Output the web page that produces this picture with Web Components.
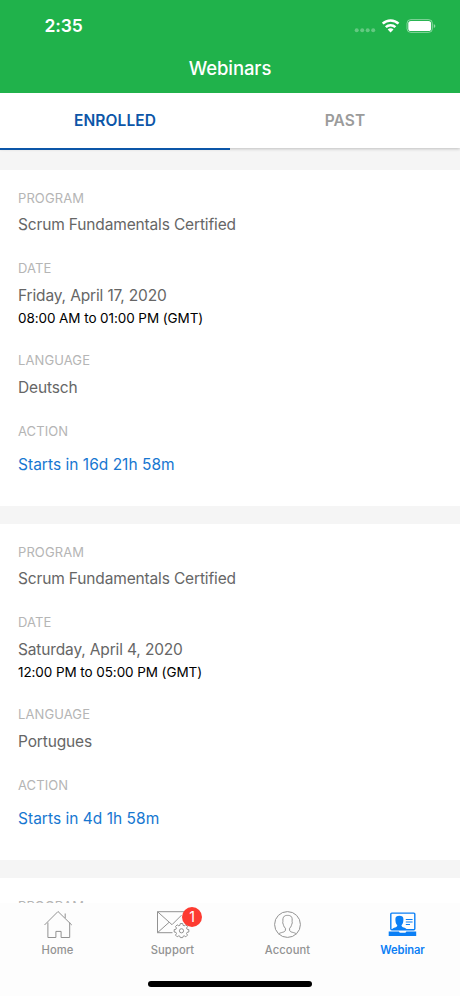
<!DOCTYPE html>
<html lang="en">
<head>
<meta charset="utf-8">
<title>Webinars</title>
<style>
body{margin:0;font-family:Inter,"Liberation Sans",sans-serif;background:#f5f5f5}
</style>
</head>
<body>
<webinar-app></webinar-app>
<script>
function define(name, html, fill) {
  customElements.define(name, class extends HTMLElement {
    connectedCallback() {
      if (this.shadowRoot) return;
      const root = this.attachShadow({mode: 'open'});
      const t = document.createElement('template');
      t.innerHTML = html;
      root.append(t.content.cloneNode(true));
      if (fill) fill(this, root);
    }
  });
}

define('status-bar', `
<style>
:host{display:flex;height:50px;box-sizing:border-box;padding:1px 24px 0 44.5px;align-items:center;justify-content:space-between;color:#fff}
b{font-size:17.5px;font-weight:600;line-height:24px;letter-spacing:-.1px}
svg{display:block}
</style>
<b>2:35</b>
<svg width="82" height="16" viewBox="354 17 82 16">
  <g fill="#fff" opacity=".3"><circle cx="356.7" cy="29.3" r="2"/><circle cx="362.2" cy="29.3" r="2"/><circle cx="367.7" cy="29.3" r="2"/><circle cx="373.2" cy="29.3" r="2"/></g>
  <g fill="none" stroke="#fff" stroke-width="2.5"><path d="M382.7 22.7a11.2 11.2 0 0 1 15.8 0"/><path d="M385.8 26.1a6.9 6.9 0 0 1 9.6 0"/></g>
  <path d="M387.7 28.5a4 4 0 0 1 5.8 0L390.6 31.5z" fill="#fff"/>
  <rect x="407" y="18.6" width="25.4" height="12.8" rx="3.8" fill="none" stroke="#fff" stroke-opacity=".45"/>
  <rect x="408.3" y="19.9" width="22.8" height="10.2" rx="2.6" fill="#fff"/>
  <path d="M433.8 22.9q1.6.7 1.6 2.1t-1.6 2.1z" fill="#fff" opacity=".5"/>
</svg>`);

define('nav-header', `
<style>
:host{display:block;height:92.5px;background:#20b24b;color:#fff;position:relative;z-index:1}
h1{margin:0;height:36px;line-height:36px;text-align:center;font-size:18.5px;font-weight:500;letter-spacing:-.1px}
</style>
<status-bar></status-bar><h1><slot></slot></h1>`);

define('tab-item', `
<style>
:host{flex:1;display:block;box-sizing:border-box;height:57.5px;line-height:55px;text-align:center;font-size:15.5px;font-weight:600;color:#9b9b9b;letter-spacing:.1px;border-bottom:2px solid transparent}
:host([active]){color:#0c56a8;border-color:#0c56a8}
</style><slot></slot>`);

define('tab-bar', `
<style>
:host{display:flex;height:55.5px;background:#fff;box-shadow:0 1px 3px rgba(0,0,0,.22);position:relative}
</style><slot></slot>`);

define('info-field', `
<style>
:host{display:block;height:70px}
:host([time]){height:92px}
.l{font-size:13px;line-height:18px;color:#b5b5b5;letter-spacing:.1px}
.v{font-size:15.5px;line-height:24px;margin-top:6px;color:#666;letter-spacing:-.15px}
:host([time]) .v,:host([low]) .v{margin-top:7px}
.t{font-size:13.5px;line-height:22px;margin-top:-1px;color:#000;letter-spacing:-.08px}
:host([action]) .l{position:relative;top:.5px}
:host([action]) .v{margin-top:13.5px;color:#1777d1;letter-spacing:.02px}
</style><div class="l"></div><div class="v"></div>`, (el, root) => {
  root.querySelector('.l').textContent = el.getAttribute('label');
  root.querySelector('.v').textContent = el.getAttribute('value');
  if (el.hasAttribute('time')) {
    const d = document.createElement('div');
    d.className = 't';
    d.textContent = el.getAttribute('time');
    root.append(d);
  }
});

define('webinar-item', `
<style>
:host{display:block;box-sizing:border-box;height:336px;padding:19px 18px 0;background:#fff;margin-bottom:18px}
</style>
<section></section>`, (el, root) => {
  const g = k => el.getAttribute(k);
  root.querySelector('section').innerHTML = `<info-field label="PROGRAM" value="${g('program')}"></info-field>` +
    (g('date') ? `<info-field label="DATE" value="${g('date')}" time="${g('time')}"></info-field>
    <info-field label="LANGUAGE" value="${g('language')}" low></info-field>
    <info-field label="ACTION" value="${g('action')}" action></info-field>` : '');
});

define('nav-item', `
<style>
:host{width:115px;display:flex;flex-direction:column;align-items:center;color:#929292}
:host([active]){color:#0b7ff5}
.i{position:relative;height:39px;width:44px}
svg{display:block;width:44px;height:38px;overflow:visible}
.n{font-size:11.2px;font-weight:500;line-height:16px;letter-spacing:.1px}
:host([active]) .n{font-weight:600;letter-spacing:-.1px}
em{position:absolute;left:31.5px;top:3.5px;width:20px;height:20px;border-radius:50%;background:#fd3b31;color:#fff;font:400 14px/20px Inter,sans-serif;text-align:center}
</style>
<div class="i"></div><div class="n"><slot></slot></div>`, (el, root) => {
  const icons = {
    home: '<path d="M8.5 22 22 8.5 35.8 22M11.9 19.5V34.5H19.9V28.4H25.1V34.5H33.7V19.5M29.2 15V10.5"/>',
    support: '<g transform="translate(1 .2)"><path d="M20.5 29.5H5.5V8.5H34M5.5 8.5 20 21.5 29.5 12M5.5 29.5 17 19.2"/><path d="M28.3 22h2.4l.4 1.8 1.1.5 1.6-1 1.7 1.7-1 1.6.5 1.1 1.8.4v2.4l-1.8.4-.5 1.1 1 1.6-1.7 1.7-1.6-1-1.1.5-.4 1.3h-2.4l-.4-1.3-1.1-.5-1.6 1-1.7-1.7 1-1.6-.5-1.1-1.8-.4v-2.4l1.8-.4.5-1.1-1-1.6 1.7-1.7 1.6 1 1.1-.5z" transform="translate(0 -1.7)"/><circle cx="29.5" cy="27.6" r="2.1"/></g>',
    account: '<g transform="translate(-.5 0)"><circle cx="22" cy="21.5" r="12.9"/><path d="M13.2 31C15 28.9 19.9 29.8 19.9 27V25.2C18 23.8 18.1 21.7 17.2 19.8 17.8 18.5 16.8 16 18 14.2 19 12.3 21 12.4 22 12.4S25.2 12.3 26.2 14.2C27.2 16 26.2 18.5 26.8 19.8 25.9 21.7 26 23.8 24.1 25.2V27C24.1 29.8 29 28.9 30.8 31"/></g>',
    webinar: '<rect x="9.8" y="10.1" width="24" height="16.7" rx="1" stroke-width="1.4"/><path fill="currentColor" stroke="none" d="M11 26.5C12 24.3 16.3 25 16.3 22.3 14.6 20.8 14.4 18.5 14.4 16 14.4 13.6 15.9 12.7 18.4 12.7S22.4 13.6 22.4 16C22.4 18.5 22.2 20.8 20.5 22.3 20.5 25 24.8 24.3 25.8 26.5zM7.7 28.6H17.8L18.8 29.8H24.4L25.4 28.6H35.2V32.9H7.7z"/><path d="M24.8 16.5H31.6M24.8 19H31.6M24.8 21.5H29" stroke-width="1.1"/>'
  };
  const i = root.querySelector('.i');
  i.innerHTML = `<svg viewBox="0 0 44 38" fill="none" stroke="currentColor" stroke-width="1">${icons[el.getAttribute('icon')]}</svg>`;
  if (el.hasAttribute('badge')) {
    const e = document.createElement('em');
    e.textContent = el.getAttribute('badge');
    i.append(e);
  }
});

define('bottom-nav', `
<style>
:host{display:flex;flex-direction:column;align-items:center;height:93px;background:#fdfdfd}
nav{display:flex;width:460px;height:78px}
i{display:block;width:164px;height:5.5px;border-radius:3px;background:#000}
</style><nav><slot></slot></nav><i></i>`);

define('webinar-app', `
<style>
:host{display:flex;flex-direction:column;width:460px;height:996px;overflow:hidden}
main{flex:1;min-height:0;overflow:hidden;padding-top:22px;background:#f5f5f5}
</style>
<nav-header>Webinars</nav-header>
<tab-bar><tab-item active>ENROLLED</tab-item><tab-item>PAST</tab-item></tab-bar>
<main>
<webinar-item program="Scrum Fundamentals Certified" date="Friday, April 17, 2020" time="08:00 AM to 01:00 PM (GMT)" language="Deutsch" action="Starts in 16d 21h 58m"></webinar-item>
<webinar-item program="Scrum Fundamentals Certified" date="Saturday, April 4, 2020" time="12:00 PM to 05:00 PM (GMT)" language="Portugues" action="Starts in 4d 1h 58m"></webinar-item>
<webinar-item program=""></webinar-item>
</main>
<bottom-nav>
<nav-item icon="home">Home</nav-item><nav-item icon="support" badge="1">Support</nav-item><nav-item icon="account">Account</nav-item><nav-item icon="webinar" active>Webinar</nav-item>
</bottom-nav>`);
</script>
</body>
</html>
